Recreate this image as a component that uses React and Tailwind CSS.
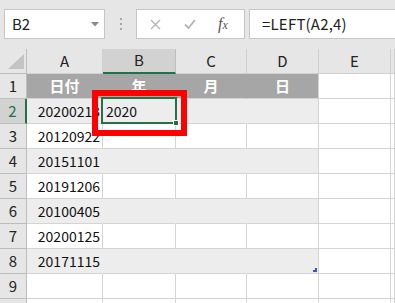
import React from "react";

const font = { fontFamily: '"Noto Sans CJK JP", "Noto Sans", sans-serif' };

const COLS = ["A", "B", "C", "D", "E", ""];

const ROWS = [
  { n: 1, head: true, cells: ["日付", "年", "月", "日"] },
  { n: 2, band: true, cells: ["20200213", "2020"] },
  { n: 3, cells: ["20120922"] },
  { n: 4, band: true, cells: ["20151101"] },
  { n: 5, cells: ["20191206"] },
  { n: 6, band: true, cells: ["20100405"] },
  { n: 7, cells: ["20200125"] },
  { n: 8, band: true, cells: ["20171115"], last: true },
  { n: 9, cells: [] },
  { n: "", cells: [] },
];

function Toolbar() {
  return (
    <div className="h-[49px] bg-[#e6e6e6] flex items-start pt-[9px] pl-[4px]">
      {/* name box */}
      <div className="w-[101px] h-[30px] bg-white border border-[#c6c6c6] flex items-center justify-between pl-[7px] pr-[5px]">
        <span className="text-[15px] text-[#222]">B2</span>
        <svg width="8" height="5" viewBox="0 0 8 5">
          <path d="M0 0h8L4 4.5z" fill="#8a8a8a" />
        </svg>
      </div>
      {/* dots */}
      <div className="w-[31px] h-[30px] flex flex-col items-center justify-center gap-[3px]">
        <span className="w-[2px] h-[2px] bg-[#a6a6a6]" />
        <span className="w-[2px] h-[2px] bg-[#a6a6a6]" />
        <span className="w-[2px] h-[2px] bg-[#a6a6a6]" />
      </div>
      {/* cancel / enter / fx */}
      <div className="w-[109px] h-[30px] bg-white border border-[#c6c6c6] flex items-center">
        <svg className="ml-[13px]" width="11" height="11" viewBox="0 0 11 11">
          <path d="M1 1l9 9M10 1l-9 9" stroke="#b4b4b4" strokeWidth="1.3" />
        </svg>
        <svg className="ml-[23px]" width="12" height="10" viewBox="0 0 12 10">
          <path d="M1 5.5l3.5 3.5L11 1" stroke="#b4b4b4" strokeWidth="1.8" fill="none" />
        </svg>
        <span
          className="ml-[22px] text-[16px] italic text-[#555] leading-none"
          style={{ fontFamily: '"Liberation Serif", serif' }}
        >
          f<span className="text-[12px]">x</span>
        </span>
      </div>
      {/* formula input */}
      <div className="ml-[4px] flex-1 h-[30px] bg-white border border-[#c6c6c6] border-r-0 flex items-center pl-[12px]">
        <span className="text-[15px] text-[#222] tracking-[0.2px]">=LEFT(A2,4)</span>
      </div>
    </div>
  );
}

function HeaderRow() {
  return (
    <>
      <div className="h-[25px] bg-[#e6e6e6] border-r border-b border-[#bdbdbd] relative">
        <svg className="absolute left-[8px] top-[5px]" width="17" height="16" viewBox="0 0 17 16">
          <path d="M16 0v15H0z" fill="#c3c3c3" />
        </svg>
      </div>
      {COLS.map((c, i) => {
        const sel = c === "B";
        return (
          <div
            key={i}
            className={
              sel
                ? "h-[25px] bg-[#d2d2d2] border-r border-[#bdbdbd] border-b-2 border-b-[#217346] flex items-center justify-center text-[15px] text-[#222]"
                : "h-[25px] bg-[#e6e6e6] border-r border-b border-[#d0d0d0] flex items-center justify-center text-[15px] text-[#222]"
            }
          >
            {c}
          </div>
        );
      })}
    </>
  );
}

function Row({ row }) {
  const sel = row.n === 2;
  return (
    <>
      <div
        className={
          sel
            ? "h-[25px] bg-[#d2d2d2] border-r-2 border-r-[#217346] border-b border-b-[#bdbdbd] flex items-center justify-center text-[15px] text-[#217346]"
            : "h-[25px] bg-[#e6e6e6] border-r border-b border-[#bdbdbd] flex items-center justify-center text-[15px] text-[#222]"
        }
      >
        {row.n}
      </div>
      {COLS.map((c, i) => {
        const inTable = i < 4;
        const text = row.cells[i] || "";
        let bg = "bg-white";
        let br = "border-r-[#d4d4d4]";
        if (inTable && row.head) {
          bg = "bg-[#a6a6a6]";
          if (i < 3) br = "border-r-[#a6a6a6]";
        } else if (inTable && row.band) {
          bg = "bg-[#ededed]";
          if (i < 3) br = "border-r-[#ededed]";
        }
        const isB2 = row.n === 2 && i === 1;
        const isNum = i === 0 && !row.head;
        return (
          <div
            key={i}
            className={`h-[25px] relative border-r border-b border-b-[#d4d4d4] ${br} ${bg} flex items-center ${
              row.head
                ? "justify-center text-white font-bold text-[15px]"
                : isNum
                ? "justify-end pr-[2px] text-[#111] text-[14px]"
                : "justify-start pl-[3px] text-[#111] text-[14px]"
            } whitespace-nowrap`}
          >
            {text}
            {isB2 && (
              <div className="absolute left-[-2px] top-[-2px] right-[-2px] bottom-[-1px] border-2 border-[#217346] z-10">
                <span className="absolute right-[-4px] bottom-[-4px] w-[6px] h-[6px] bg-[#217346] border border-white" />
              </div>
            )}
            {row.last && i === 3 && (
              <svg className="absolute right-[1px] bottom-[1px]" width="4" height="4" viewBox="0 0 4 4">
                <path d="M4 0v4H0V2h2V0z" fill="#3a56b8" />
              </svg>
            )}
          </div>
        );
      })}
    </>
  );
}

export default function App() {
  return (
    <div className="w-[395px] h-[303px] overflow-hidden bg-white relative" style={font}>
      <Toolbar />
      <div className="grid grid-cols-[27px_76px_73px_71px_72px_72px_1fr]">
        <HeaderRow />
        {ROWS.map((r, idx) => (
          <Row key={idx} row={r} />
        ))}
      </div>
      {/* red highlight annotation */}
      <div className="absolute left-[92px] top-[90px] w-[95px] h-[46px] border-[6px] border-[#ff0000] z-20 pointer-events-none" />
    </div>
  );
}
